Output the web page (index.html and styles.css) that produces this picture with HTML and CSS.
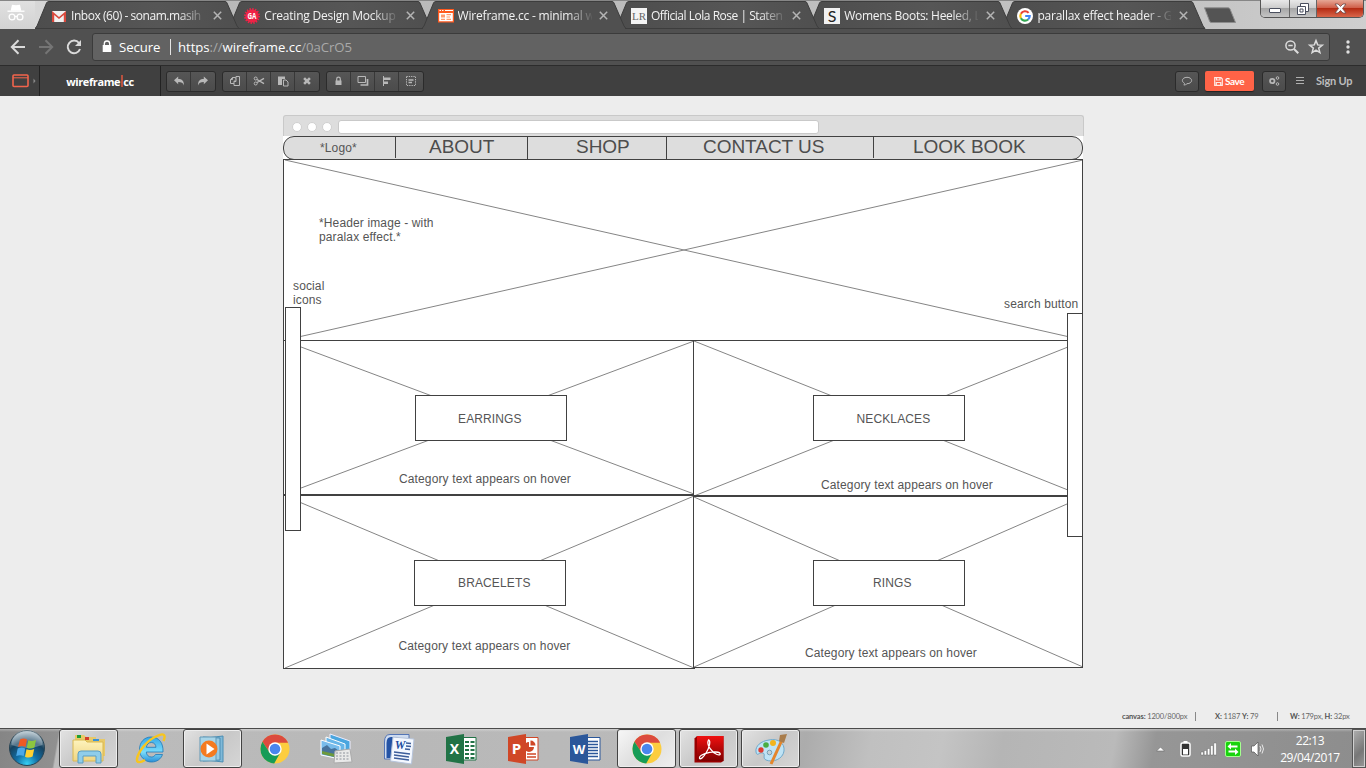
FILE: index.html
```html
<!DOCTYPE html>
<html lang="en">
<head>
<meta charset="utf-8">
<title>wireframe.cc</title>
<link rel="stylesheet" href="styles.css">
</head>
<body>
<svg class="defs" width="0" height="0">
  <defs>
    <linearGradient id="tabfill" x1="0" y1="0" x2="1" y2="0"><stop offset="0" stop-color="#4d4d4d"/><stop offset=".6" stop-color="#565656"/><stop offset="1" stop-color="#4f4f4f"/></linearGradient>
    <radialGradient id="orb" cx=".5" cy=".95" r=".9"><stop offset="0" stop-color="#35d0f4"/><stop offset=".35" stop-color="#126fa6"/><stop offset=".7" stop-color="#16425f"/><stop offset="1" stop-color="#9fb4c0"/></radialGradient>
    <linearGradient id="folder" x1="0" y1="0" x2="0" y2="1"><stop offset="0" stop-color="#fdf3bd"/><stop offset="1" stop-color="#f0d582"/></linearGradient>
    <linearGradient id="ie" x1="0" y1="0" x2="0" y2="1"><stop offset="0" stop-color="#35a8e8"/><stop offset=".6" stop-color="#7bdcfa"/><stop offset="1" stop-color="#2a8fd8"/></linearGradient>
    <linearGradient id="red" x1="0" y1="0" x2="0" y2="1"><stop offset="0" stop-color="#f01010"/><stop offset="1" stop-color="#7d0000"/></linearGradient>
  </defs>
  <symbol id="tab" viewBox="0 0 206 29"><path d="M0 28.5 L2 26 L11.5 3 Q12 1.500 14 1.500 H190 Q191.500 1.500 192 3 L202 26 L204 28.500Z" stroke="#3d3d3d"/></symbol>
  <symbol id="x" viewBox="0 0 9 9"><path d="M.8.8 8.200 8.200M8.200.8.8 8.200" stroke="#b4b4b4" stroke-width="1.500" fill="none"/></symbol>
  <symbol id="chrome" viewBox="0 0 30 30">
    <circle cx="15" cy="15" r="14.500" fill="#fccd3f"/>
    <path d="M2.440 7.750A14.500 14.500 0 0 1 27.560 7.750L28 8.700H15L9.500 18.200Z" fill="#dc4b3e"/>
    <path d="M2.440 7.750A14.500 14.500 0 0 0 14.200 29.480L20.500 18.300 15 21.500 9.500 18.200Z" fill="#179c57"/>
    <circle cx="15" cy="15" r="6.700" fill="#fff"/><circle cx="15" cy="15" r="5.300" fill="#4a86ee"/>
  </symbol>
</svg>

<header class="tabstrip">
  <div class="incognito">
    <svg width="18" height="18" viewBox="0 0 18 18" fill="none" stroke="#fff" stroke-width="1.300"><path d="M4.500 6 5.500 1.500 9 2 12.500 1.500 13.500 6Z" fill="#fff"/><path d="M.5 7.200H17.500"/><circle cx="5" cy="13" r="2.900"/><circle cx="13" cy="13" r="2.900"/><path d="M7.800 12.500H10.200"/></svg>
  </div>
  <nav class="tabs">
    <div class="tab t1"><svg class="shape"><use href="#tab"/></svg>
      <svg class="fav" viewBox="0 0 16 16"><path d="M1 3H15V14H1Z" fill="#f1f1f1"/><path d="M1 14V3L8 9 15 3V14H12.800V7L8 11 3.200 7V14Z" fill="#d9493d"/></svg>
      <span class="label">Inbox (60) - sonam.masih</span><svg class="close"><use href="#x"/></svg></div>
    <div class="tab t2"><svg class="shape"><use href="#tab"/></svg>
      <svg class="fav" viewBox="0 0 16 16"><circle cx="8" cy="8" r="6.600" fill="#ee2346"/><circle cx="8" cy="8" r="7" fill="none" stroke="#ee2346" stroke-width="2" stroke-dasharray="1.400 1.350"/><text x="8" y="11.300" text-anchor="middle" font-size="8.500" font-weight="700" fill="#fff" textLength="9" lengthAdjust="spacingAndGlyphs">GA</text></svg>
      <span class="label">Creating Design Mockup</span><svg class="close"><use href="#x"/></svg></div>
    <div class="tab t3 active"><svg class="shape"><use href="#tab"/></svg>
      <svg class="fav" viewBox="0 0 16 16"><path d="M0 1H16V14H0Z" fill="#fff"/><path d="M0 1H16V14.500H0ZM1.200 5V13.300H14.800V5Z" fill="#ff5a1f" fill-rule="evenodd"/><path d="M1.500 2.500H3M4 2.500H5.500M7 2.500H15" stroke="#fff" stroke-width="1.200"/><path d="M3 6.500H7V9.500H3ZM8.500 6H13V7.200H8.500ZM8.500 8.400H12V9.500H8.500ZM3 10.800H7V12H3ZM8.500 10.800H13V12H8.500Z" fill="#ff9b70"/></svg>
      <span class="label">Wireframe.cc - minimal w</span><svg class="close"><use href="#x"/></svg></div>
    <div class="tab t4"><svg class="shape"><use href="#tab"/></svg>
      <svg class="fav" viewBox="0 0 16 16"><path d="M0 0H16V16H0Z" fill="#f4f4f4"/><text x="8" y="12" text-anchor="middle" font-family="Liberation Serif, serif" font-size="11" fill="#666" textLength="14">LR</text></svg>
      <span class="label">Official Lola Rose | Staten</span><svg class="close"><use href="#x"/></svg></div>
    <div class="tab t5"><svg class="shape"><use href="#tab"/></svg>
      <svg class="fav" viewBox="0 0 16 16"><path d="M0 0H16V16H0Z" fill="#f1f1f1"/><text x="8" y="13.600" text-anchor="middle" font-family="Lato, sans-serif" font-size="16" fill="#222">S</text></svg>
      <span class="label">Womens Boots: Heeled, L</span><svg class="close"><use href="#x"/></svg></div>
    <div class="tab t6"><svg class="shape"><use href="#tab"/></svg>
      <svg class="fav" viewBox="0 0 16 16"><circle cx="8" cy="8" r="8" fill="#fff"/><g fill="none" stroke-width="2.200"><path d="M11.600 4.900A4.700 4.700 0 0 0 3.900 5.700" stroke="#ea4335"/><path d="M3.900 5.700A4.700 4.700 0 0 0 3.900 10.300" stroke="#fbbc05"/><path d="M3.900 10.300A4.700 4.700 0 0 0 11.100 11.500" stroke="#34a853"/><path d="M11.100 11.500A4.700 4.700 0 0 0 12.700 8H8.200" stroke="#4285f4"/></g></svg>
      <span class="label">parallax effect header - G</span><svg class="close"><use href="#x"/></svg></div>
  </nav>
  <svg class="newtab" width="36" height="17" viewBox="0 0 36 17"><path d="M2.500.8H26Q27.500.8 28 2L33.500 15.500H9.500Q8 15.500 7.500 14Z" fill="#545454" stroke="#8d8d8d"/></svg>
  <div class="winctl">
    <span class="min"><i></i></span>
    <span class="max"><svg width="14" height="14" viewBox="0 0 14 14" fill="#fff" stroke="#4a4f5e"><path d="M4.500 1.500H12.500V9.500H4.500Z"/><path d="M1.500 4.500H9.500V12.500H1.500Z"/><path d="M4 7H7V10H4Z"/></svg></span>
    <span class="cls"><svg width="13" height="11" viewBox="0 0 13 11"><path d="M1 1H4L6.500 3.500 9 1H12L8.500 5.500 12 10H9L6.500 7.500 4 10H1L4.500 5.500Z" fill="#fff" stroke="#6a4a4a" stroke-width=".8"/></svg></span>
  </div>
</header>

<div class="addressbar">
  <svg class="navicons" width="92" height="37" viewBox="0 0 92 37" fill="none" stroke-width="2"><path d="M25 18H12M18.500 11.200 11.800 18 18.500 24.800" stroke="#dadada"/><path d="M39 18H52M45.500 11.200 52.200 18 45.500 24.800" stroke="#757575"/><path d="M79 14A6.300 6.300 0 1 0 80 20" stroke="#dadada"/><path d="M81 11V17H75Z" fill="#dadada"/></svg>
  <div class="omnibox">
    <svg width="10" height="13" viewBox="0 0 10 13"><path d="M2.300 6V3.700a2.700 2.700 0 0 1 5.400 0V6" fill="none" stroke="#fff" stroke-width="1.300"/><path d="M.7 5H9.300V12H.7Z" fill="#fff"/></svg>
    <span class="secure">Secure</span><i class="divider"></i>
    <span class="url">https<em>://</em>wireframe.cc<em>/0aCrO5</em></span>
    <svg class="omni-actions" width="42" height="18" viewBox="0 0 42 18" fill="none" stroke="#dcdcdc" stroke-width="1.500"><circle cx="6.500" cy="7.500" r="4.600"/><path d="M10 11 14.300 15.300" stroke-width="2"/><path d="M4.300 7.500H8.700"/><path d="M32 2.600 33.700 6.900 38.300 7.200 34.700 10.100 35.900 14.600 32 12.100 28.100 14.600 29.300 10.100 25.700 7.200 30.300 6.900Z"/></svg>
  </div>
  <svg class="menu" width="4" height="14" viewBox="0 0 4 14" fill="#e0e0e0"><circle cx="2" cy="2" r="1.700"/><circle cx="2" cy="7" r="1.700"/><circle cx="2" cy="12" r="1.700"/></svg>
</div>

<div class="toolbar">
  <div class="device"><svg width="26" height="14" viewBox="0 0 26 14"><rect x="1" y="1" width="15" height="11.500" rx="1" fill="none" stroke="#f2644c" stroke-width="1.600"/><path d="M1 3.800H16" stroke="#f2644c"/><path d="M21.500 4.500 23.500 7 21.500 9.500Z" fill="#8b8b8b"/></svg></div>
  <div class="brand">wireframe<b></b>cc</div>
  <div class="group g1">
    <span><svg viewBox="0 0 12 12"><path d="M5.200 1.500V4C9 4 11 5.500 11 10.500 10 7.800 8.500 7 5.200 7V9.300L1 5.300Z"/></svg></span>
    <span><svg viewBox="0 0 12 12"><path d="M6.800 1.500V4C3 4 1 5.500 1 10.500 2 7.800 3.500 7 6.800 7V9.300L11 5.300Z"/></svg></span>
  </div>
  <div class="group">
    <span><svg viewBox="0 0 12 12" class="line"><path d="M5 8.500H1.500V4.500L3.500 2.500H6.500V3.500M3.500 2.500V4.500H1.500M5 10.500V6.500L7 4.500V6.500H5M7 4.500V1.500H10.500V10.500H5"/></svg></span>
    <span><svg viewBox="0 0 12 12" class="line"><circle cx="2.700" cy="3.500" r="1.500"/><circle cx="2.700" cy="8.500" r="1.500"/><path d="M4 4.500 11 8.700M4 7.500 11 3.300" stroke-width="1.400"/></svg></span>
    <span><svg viewBox="0 0 12 12"><path d="M1 1.500H8V4H5V10H1Z"/><path d="M6.500 5H9L11 7V11H6.500Z" fill="none" stroke="#b8b8b8"/></svg></span>
    <span><svg viewBox="0 0 12 12"><path d="M2.200 4 4 2.200 6 4.200 8 2.200 9.800 4 7.800 6 9.800 8 8 9.800 6 7.800 4 9.800 2.200 8 4.200 6Z"/></svg></span>
  </div>
  <div class="group">
    <span><svg viewBox="0 0 12 12"><path d="M2.500 5.500H8.500V10H2.500Z"/><path d="M3.700 6V4a1.800 1.800 0 0 1 3.600 0V6" fill="none" stroke="#b8b8b8" stroke-width="1.200"/></svg></span>
    <span><svg viewBox="0 0 12 12" class="line"><path d="M1 1.500H8.500V7.500H1Z"/><path d="M10.500 4V10H3.500" stroke-width="1.700"/></svg></span>
    <span><svg viewBox="0 0 12 12"><path d="M2 1H3V11H2ZM3 2.500H9.500V5H3ZM3 6.500H7V9H3Z"/></svg></span>
    <span><svg viewBox="0 0 12 12" class="line"><rect x="1.500" y="1.500" width="9" height="9" stroke-dasharray="1.300 1"/><path d="M3.500 5H8.500M3.500 7.500H7" stroke-width="1.600"/></svg></span>
  </div>
  <div class="right">
    <span class="btn"><svg viewBox="0 0 12 12" class="line"><path d="M6 2.300C8.800 2.300 10.600 3.800 10.600 5.500S8.800 8.700 6 8.700C5 9.700 4 10 2.800 10 3.500 9.300 3.700 8.700 3.400 8.200 2.200 7.600 1.400 6.600 1.400 5.500 1.400 3.800 3.200 2.300 6 2.300Z"/></svg></span>
    <span class="save"><svg width="9" height="9" viewBox="0 0 9 9" fill="none" stroke="#ffe9e4" stroke-width="1.200"><path d="M.7.7H7L8.300 2V8.300H.7ZM2.500.7V3H6V.7M2.300 8V5.500H6.700V8"/></svg>Save</span>
    <span class="btn gears"><svg viewBox="0 0 12 12" class="line"><circle cx="4.300" cy="6" r="2.200" stroke-width="1.800"/><circle cx="9.500" cy="3" r="1.300"/><circle cx="9.500" cy="9" r="1.300"/></svg></span>
    <svg class="burger" width="8" height="8" viewBox="0 0 8 8"><path d="M0 .5H8M0 3.500H8M0 6.500H8" stroke="#b0b0b0"/></svg>
    <span class="signup">Sign Up</span>
  </div>
</div>

<main class="stage">
  <div class="canvas">
    <div class="frame"><i></i><i></i><i></i><span></span></div>
    <div class="page"></div>
    <div class="node nav"></div>
    <svg class="sketch" width="801" height="554" viewBox="283 115 801 554">
      <path class="cross" d="M285 160 1083 340M1083 160 285 340M285 341 694 494M694 341 285 494M694 341 1083 496M1083 341 694 496M285 496 694 668M694 496 285 668M694 497 1083 667M1083 497 694 667"/>
      <path class="edge" d="M283 159.500H1083M283.500 159V669M1082.500 159V668M283 340.500H1083M693.500 340V669M283 494.500H694M283 495.500H1083M693 496.500H1083M283 668.500H695M693 667.500H1083"/>
      <path class="edge" d="M395.500 137V158M527.500 137V159M666.500 137V159M873.500 137V158"/>
    </svg>
    <div class="node rail left"></div>
    <div class="node rail right-rail"></div>
    <div class="node box b1"></div><div class="node box b2"></div><div class="node box b3"></div><div class="node box b4"></div>
    <p class="txt logo">*Logo*</p>
    <p class="txt big n1">ABOUT</p><p class="txt big n2">SHOP</p><p class="txt big n3">CONTACT US</p><p class="txt big n4">LOOK BOOK</p>
    <p class="txt head">*Header image - with<br>paralax effect.*</p>
    <p class="txt social">social<br>icons</p><p class="txt search">search button</p>
    <p class="txt c1">EARRINGS</p><p class="txt c2">NECKLACES</p><p class="txt c3">BRACELETS</p><p class="txt c4">RINGS</p>
    <p class="txt h1">Category text appears on hover</p><p class="txt h2">Category text appears on hover</p><p class="txt h3">Category text appears on hover</p><p class="txt h4">Category text appears on hover</p>
  </div>
  <div class="status"><span class="s1"><b>canvas:</b> 1200/800px</span><span class="s2"><b>X:</b> 1187 <b>Y:</b> 79</span><span class="s3"><b>W:</b> 179px, <b>H:</b> 32px</span></div>
</main>

<footer class="taskbar">
  <div class="start"><svg width="38" height="38" viewBox="0 0 38 38"><circle cx="19" cy="19" r="17.500" fill="url(#orb)" stroke="#274353"/><path d="M3.500 16A15.500 15.500 0 0 1 34.500 16Q19 22 3.500 16Z" fill="#fff" opacity=".28"/><path d="M12 10.500Q15.500 8.500 19 10.500L17.500 18Q14 16.200 10 18Z" fill="#ee5a24"/><path d="M20.300 11.200Q24 13 28 10.700L26.500 18.500Q22.500 20.500 18.800 18.700Z" fill="#8cc63f"/><path d="M9.700 19.500Q13.500 17.500 17.200 19.500L15.700 27Q12 25.300 8.200 27Z" fill="#4aa8e8"/><path d="M18.500 20.200Q22 22 26.200 19.900L24.600 27.500Q21 29.500 17 27.700Z" fill="#ffd031"/></svg></div>
  <div class="apps">
    <div class="app open"><svg width="36" height="34" viewBox="0 0 36 34"><path d="M4 5V3H13L15 5H25V7H34V24H4Z" fill="#e8c968"/><path d="M6 3H10V6H6Z" fill="#1d9e35"/><path d="M14 5H18V8H14Z" fill="#d33e2a"/><path d="M22 7H28V9H22Z" fill="#3992d8"/><path d="M2 8H14L16 10H32V29H2Z" fill="url(#folder)" stroke="#d9b850"/><path d="M7 31V22Q7 19 10 19H27Q30 19 30 22V31H25V24H12V31Z" fill="#8fcdea" stroke="#5b9dc2"/></svg></div>
    <div class="app"><svg width="32" height="34" viewBox="0 0 32 34"><path d="M16 5C9 5 4.500 10.500 4.500 17.500S9.500 30 16.500 30C22 30 26 27 27.500 22.500H20.500C19.500 24.200 18.200 25 16.300 25 13.500 25 11.500 23 11.300 20H28C28.500 11 24 5 16 5ZM11.400 15.300C11.800 12.500 13.500 10.500 16.300 10.500S20.800 12.500 21 15.300Z" fill="url(#ie)" stroke="#1e78b8" stroke-width=".8"/><path d="M28.500 9C31.500 2 28 1 22 4 12 8 3 20 2 27 1.500 31 5 31 10 28" fill="none" stroke="#f8c51d" stroke-width="2.400"/></svg></div>
    <div class="app open"><svg width="34" height="32" viewBox="0 0 34 32"><path d="M10 5 27 3V29L10 27Z" fill="#80b9d8" stroke="#4b8eb4"/><path d="M7 4 24 5V27L7 28Z" fill="#9acbe2" stroke="#4b8eb4"/><path d="M4 4H20V28H4Z" fill="#a8d5e8" stroke="#6399b6"/><circle cx="13" cy="16" r="8.500" fill="#f47b20"/><path d="M10.500 10.500V21.500L18.500 16Z" fill="#fff"/></svg></div>
    <div class="app"><svg width="30" height="30"><use href="#chrome"/></svg></div>
    <div class="app"><svg width="34" height="34" viewBox="0 0 34 34"><path d="M10 2 30 9V20L10 16Z" fill="#4aa6df" stroke="#eef"/><path d="M6 5 25 12V24L6 20Z" fill="#68b6e8" stroke="#fff"/><path d="M1 8 20 14V27L1 23Z" fill="#78bceb" stroke="#fff"/><path d="M2 16 7 13 11 17 15 16 19 19V26L2 22Z" fill="#47739c"/><path d="M2 19 19 23V26L2 22Z" fill="#6c9a3c"/><path d="M15 19 30 17 32 30 14 31Z" fill="#e9e9e9" stroke="#aaa"/><path d="M16 21H29M16 24H30M16 27H30" stroke="#8d929b" stroke-dasharray="2 1.500"/></svg></div>
    <div class="app"><svg width="34" height="32" viewBox="0 0 34 32"><path d="M8 1.500H27V26H2.500V9Q2.500 1.500 8 1.500Z" fill="#cfdcf0" stroke="#5475b5"/><path d="M9 4H16V25H4.500V10Q4.500 4 9 4Z" fill="#2453a5"/><path d="M11 4 32 6 29.500 31 8.500 28Z" fill="#f4f8ff" stroke="#b5c3da"/><text x="18" y="16" text-anchor="middle" font-family="Liberation Serif, serif" font-weight="700" font-style="italic" font-size="12" fill="#214ca0">W</text><path d="M24 10 29 10.500M24 13 29 13.500M23 16 28 16.500M12 19 28 21M12 22 27 24M12 25 27 27" stroke="#3c5d9b" stroke-width="1.500"/></svg></div>
    <div class="app"><svg width="32" height="32" viewBox="0 0 32 32"><path d="M17 4.500H31V27H17Z" fill="#fff" stroke="#217346"/><path d="M20 8H24V10H20ZM25.500 8H29.500V10H25.500ZM20 12H24V14H20ZM25.500 12H29.500V14H25.500ZM20 16H24V18H20ZM25.500 16H29.500V18H25.500ZM20 20H24V22H20ZM25.500 20H29.500V22H25.500ZM20 24H24V26H20ZM25.500 24H29.500V26H25.500Z" fill="#217346"/><path d="M1 4 19 1V31L1 28Z" fill="#217346"/><text x="9.500" y="21" text-anchor="middle" font-size="14" font-weight="700" fill="#fff">X</text></svg></div>
    <div class="app"><svg width="32" height="32" viewBox="0 0 32 32"><path d="M17 4.500H31V27H17Z" fill="#fff" stroke="#d04727"/><path d="M22 9A5 5 0 1 0 27 14H22Z" fill="#d04727"/><path d="M23.500 7.500V12.500H28.500A5 5 0 0 0 23.500 7.500Z" fill="#d04727"/><path d="M20 21H29M20 24H29" stroke="#d04727" stroke-width="1.500"/><path d="M1 4 19 1V31L1 28Z" fill="#d04727"/><text x="9.500" y="21" text-anchor="middle" font-size="15" font-weight="700" fill="#fff">P</text></svg></div>
    <div class="app"><svg width="32" height="32" viewBox="0 0 32 32"><path d="M17 4.500H31V27H17Z" fill="#fff" stroke="#2b579a"/><path d="M19 8.500H29M19 11.500H29M19 14.500H29M19 17.500H29M19 20.500H29M19 23.500H29" stroke="#2b579a" stroke-width="1.300"/><path d="M1 4 19 1V31L1 28Z" fill="#2b579a"/><text x="10" y="21" text-anchor="middle" font-size="13" font-weight="700" fill="#fff">W</text></svg></div>
    <div class="app open lit"><svg width="30" height="30"><use href="#chrome"/></svg></div>
    <div class="app open"><svg width="30" height="30" viewBox="0 0 30 30"><path d="M.5 4.500 3 2H29.500V27L27 28.500H.5Z" fill="#900"/><path d="M3 2H29.500V27H3Z" fill="url(#red)"/><path d="M14.500 6C17 6 15.500 14 12 19 9 24 6 26 5.500 24 5 21 15 17.500 22 18 28 18.500 27 22 23 20.500 18 18.500 12 11 14.500 6Z" fill="none" stroke="#fff" stroke-width="1.300"/></svg></div>
    <div class="app open"><svg width="34" height="34" viewBox="0 0 34 34"><path d="M15 8C24 6 31 11 30 19 29 27 19 31 12 28 8 26 12 22 9 21 5 20 3 25 2 20 1 14 7 9 15 8Z" fill="#bfe3f5" stroke="#6fa9cb"/><circle cx="7" cy="18" r="2.700" fill="#e03c30"/><circle cx="12" cy="13" r="2.800" fill="#49ad43"/><circle cx="19" cy="11" r="3" fill="#f2b41d"/><circle cx="15.500" cy="20.500" r="2.300" fill="#c8d1d6" stroke="#76a0b5"/><path d="M28 8 17 32" stroke="#e4862c" stroke-width="3"/><path d="M26 3 33 2 30 11 25 9Z" fill="#a97d4c"/></svg></div>
  </div>
  <div class="tray">
    <svg width="112" height="18" viewBox="0 0 112 18"><path d="M1.500 11 5.500 7 9.500 11Z" fill="#fff" stroke="#666" stroke-width=".6"/><rect x="26" y="3" width="9" height="13" rx="1.500" fill="#333" stroke="#fff" stroke-width="1.500"/><path d="M28.500 1H32.500V3H28.500ZM28 9H33V14.500H28Z" fill="#fff"/><path d="M46 12H48.400V15H46ZM49.200 10.500H51.600V15H49.200ZM52.400 8.500H54.800V15H52.400ZM55.600 5.500H58V15H55.600ZM58.800 3H61.400V15H58.800Z" fill="#fff" stroke="#555" stroke-width=".4"/><rect x="70.500" y="1.500" width="15" height="15" rx="1.500" fill="#18d30d" stroke="#a5ff90"/><path d="M82.500 5.500H76V3L72.500 6.500 76 9.500V7.500H82.500ZM73.500 10.500H80V8.500L83.500 12 80 15V12.500H73.500Z" fill="#fff"/><path d="M96.500 6H99L103 2V16L99 12H96.500Z" fill="#fff" stroke="#555" stroke-width=".7"/><path d="M105 6Q107 9 105 12M107 4.500Q110 9 107 13.500" fill="none" stroke="#e8e8e8"/></svg>
    <div class="clock">22:13<br>29/04/2017</div>
    <div class="desk"></div>
  </div>
</footer>
</body>
</html>
```
FILE: styles.css
```css
* { box-sizing: border-box; }
body { margin: 0; width: 1366px; height: 768px; overflow: hidden; display: flex; flex-direction: column; font-family: "Open Sans", "Noto Sans", sans-serif; background: #ededed; }
.defs { position: absolute; }
svg { flex: none; display: block; }

.tabstrip { height: 29px; display: flex; background: linear-gradient(90deg, #dedede, #b8b8b8 15%, #c2c2c2 85%, #cfcfcf); border-top: 1px solid #868686; }
.incognito { width: 35px; padding: 3px 0 0 7px; background: linear-gradient(#e0e0e0, #d2d2d2); }
.tabs { display: flex; width: 1167px; margin-top: -1px; }
.tab { position: relative; flex: none; width: 193.3px; height: 29px; display: flex; align-items: center; padding: 2px 0 0 16px; }
.shape { position: absolute; left: 0; top: 0; width: 206px; height: 29px; fill: url(#tabfill); }
.active .shape { fill: #505050; }
.t1 { z-index: 6; } .t2 { z-index: 5; } .t3 { z-index: 9; } .t4 { z-index: 4; } .t5 { z-index: 3; } .t6 { z-index: 2; }
.tab.active::after { content: ""; position: absolute; left: 1px; bottom: 0; width: 202px; height: 1px; background: #505050; }
.fav { position: relative; width: 16px; height: 16px; }
.label { position: relative; width: 134px; margin-left: 4px; white-space: nowrap; font-size: 12px; letter-spacing: -0.22px; color: #f2f2f2; -webkit-mask-image: linear-gradient(90deg, #000 108px, transparent 136px); mask-image: linear-gradient(90deg, #000 108px, transparent 136px); }
.t1 .label { letter-spacing: -0.46px; }
.t3 .label { letter-spacing: -0.2px; }
.t4 .label { letter-spacing: -0.47px; }
.t5 .label { letter-spacing: -0.28px; }
.t6 .label { letter-spacing: -0.24px; }
.close { position: relative; width: 9px; height: 9px; margin-left: 7.500px; }
.newtab { margin-top: 6px; }
.winctl { display: flex; height: 18px; margin: -1px 0 0 22px; border: 1px solid #555; border-top: 0; border-radius: 0 0 5px 5px; overflow: hidden; width: 104px; }
.winctl span { display: flex; align-items: center; justify-content: center; background: linear-gradient(#e8e8e8, #cdcdcd 45%, #a7a7a7 50%, #c4c4c4); border-right: 1px solid #666; }
.min { width: 29px; } .max { width: 27px; }
.min i { width: 12px; height: 5px; margin-top: 4px; background: #fff; border: 1px solid #4a4f5e; border-radius: 1px; }
.winctl .cls { flex: 1; border: 0; background: linear-gradient(#e6a795, #d0604a 45%, #b52c14 50%, #d9664a); }

.addressbar { height: 37px; display: flex; align-items: center; background: #505050; border-bottom: 1px solid #2c2c2c; }
.omnibox { width: 1238px; height: 28px; margin-top: -1px; display: flex; align-items: center; padding-left: 9px; background: #626262; border: 1px solid #3b3b3b; border-radius: 3px; color: #fff; font-size: 13.2px; }
.secure { margin-left: 7px; width: 50px; letter-spacing: -0.1px; }
.divider { width: 1px; height: 16px; background: #e4e4e4; margin: 0 7px 0 1px; }
.url { letter-spacing: -0.05px; }
.url em { font-style: normal; color: #a9a9a9; }
.omni-actions { margin: 0 3px 0 auto; }
.menu { margin-left: 16px; }

.toolbar { height: 30px; display: flex; align-items: center; background: #404040; font-family: Lato, sans-serif; }
.device { width: 40px; height: 30px; padding: 8px 0 0 12px; border-right: 1px solid #222; }
.brand { width: 121px; height: 30px; display: flex; align-items: center; justify-content: center; border-right: 1px solid #222; font: 700 11px "Open Sans", sans-serif; letter-spacing: -0.4px; color: #fff; }
.brand b { width: 2px; height: 12px; background: #b8513f; margin: 0 0 0 1px; }
.group { display: flex; margin-left: 6px; height: 21px; border: 1px solid #2b2b2b; border-radius: 3px; background: linear-gradient(#565656, #4b4b4b); }
.g1 { margin-left: 5px; }
.group span { width: 24px; display: flex; align-items: center; justify-content: center; border-right: 1px solid #383838; }
.group span:last-child { border-right: 0; }
.group svg, .btn svg { width: 12px; height: 12px; fill: #b8b8b8; }
.group svg.line, .btn svg.line { fill: none; stroke: #b8b8b8; stroke-width: 1; }
.right { margin-left: auto; display: flex; align-items: center; padding-right: 14px; }
.btn { width: 24px; height: 21px; display: flex; align-items: center; justify-content: center; border: 1px solid #2b2b2b; border-radius: 3px; background: linear-gradient(#565656, #4b4b4b); }
.save { width: 49px; height: 20px; margin: 0 8px 0 6px; padding-right: 1px; border-radius: 2px; background: #ff6347; display: flex; align-items: center; justify-content: center; gap: 2px; color: #fff; font-weight: 700; font-size: 10px; letter-spacing: -0.4px; box-shadow: 0 1px 1px #222; }
.burger { margin: 0 12px 0 10px; }
.signup { font-size: 11px; font-weight: 700; letter-spacing: -0.2px; color: #bdbdbd; width: 36px; margin-top: -1px; white-space: nowrap; }

.stage { flex: 1; position: relative; background: #ededed; padding-top: 19px; }
.canvas { position: relative; width: 801px; height: 554px; margin: 0 0 0 283px; }
.frame { height: 21px; display: flex; align-items: center; background: #ddd; border: 1px solid #c9c9c9; border-bottom: 0; border-radius: 3px 3px 0 0; padding: 2px 0 0 8px; }
.frame i { width: 10px; height: 10px; margin-right: 5px; border-radius: 50%; background: #fff; border: 1px solid #d0d0d0; }
.frame span { width: 481px; height: 14px; margin-left: 1px; background: #fff; border: 1px solid #c9c9c9; border-radius: 3px; }
.page { width: 800px; height: 532px; background: #fff; }
.node { position: absolute; background: #fff; border: 1px solid #414141; }
.nav { left: 0; top: 21px; width: 800px; height: 24px; border-radius: 11px; background: #ddd; }
.sketch { position: absolute; left: 0; top: 0; }
.cross { fill: none; stroke: #858585; stroke-width: 1; }
.edge { fill: none; stroke: #414141; }
.rail { width: 16px; height: 224px; }
.left { left: 2px; top: 192px; }
.right-rail { left: 784px; top: 198px; }
.box { width: 152px; height: 46px; }
.b1 { left: 132px; top: 280px; } .b2 { left: 530px; top: 280px; } .b3 { left: 131px; top: 445px; } .b4 { left: 530px; top: 445px; }
.txt { position: absolute; margin: 0; font: 12px/14px "Liberation Sans", Arial, sans-serif; letter-spacing: 0.13px; color: #555; white-space: nowrap; }
.big { font-size: 19px; line-height: 22px; top: 21px; letter-spacing: -0.04px; color: #4d4d4d; }
.logo { left: 37px; top: 26px; }
.n1 { left: 146px; } .n2 { left: 293px; } .n3 { left: 420px; } .n4 { left: 630px; }
.head { left: 36px; top: 101px; }
.social { left: 10px; top: 164px; } .search { left: 721px; top: 182px; }
.c1 { left: 175px; top: 297px; } .c2 { left: 573.5px; top: 297px; } .c3 { left: 175px; top: 461px; } .c4 { left: 590px; top: 461px; }
.h1 { left: 116px; top: 357px; } .h2 { left: 538px; top: 363px; } .h3 { left: 115.500px; top: 524px; } .h4 { left: 522px; top: 531px; }
.status { position: absolute; right: 17px; bottom: 7px; display: flex; font: 7.500px/9px Lato, sans-serif; letter-spacing: -0.15px; color: #666; white-space: nowrap; }
.status b { color: #555; }
.s1 { width: 74px; border-right: 1px solid #888; } .s2 { width: 82px; padding-left: 19px; border-right: 1px solid #888; } .s3 { width: 71px; padding-left: 12px; }

.taskbar { height: 40px; display: flex; border-top: 1px solid #4b4b4b; background: linear-gradient(rgba(255,255,255,.3), rgba(255,255,255,0) 3px), linear-gradient(100deg, #858585 0, #909090 58px, #bcbcbc 60px, #b8b8b8 400px, #bababa 700px, #acacac 795px, #c0c0c0 860px, #c4c4c4 930px, #b5b5b5 990px, #bababa 1100px, #969696 1140px, #8c8c8c 1366px); }
.start { width: 58px; padding-left: 8px; }
.apps { display: flex; }
.app { width: 62px; height: 39px; display: flex; align-items: center; justify-content: center; position: relative; }
.app svg { position: relative; }
.open::before { content: ""; position: absolute; inset: 0 2px 0 1px; border: 1px solid #434343; border-radius: 3px; background: linear-gradient(135deg, #e2e2e2, #c8c8c8 50%, #d6d6d6); box-shadow: inset 0 0 0 1px #ededed; }
.lit::before { background: linear-gradient(135deg, #f7f7f7, #dedede 50%, #efefef); }
.tray { margin-left: auto; display: flex; align-items: center; }
.tray svg { margin-right: 1px; }
.clock { width: 84px; text-align: center; color: #fff; font-size: 12px; line-height: 17px; letter-spacing: -0.4px; }
.desk { width: 14px; height: 39px; border: 1px solid #dcdcdc; outline: 1px solid #555; outline-offset: -1px; background: linear-gradient(135deg, #b0b0b0, #777 60%, #999); box-shadow: inset 0 0 0 1px #d0d0d0; }
```
